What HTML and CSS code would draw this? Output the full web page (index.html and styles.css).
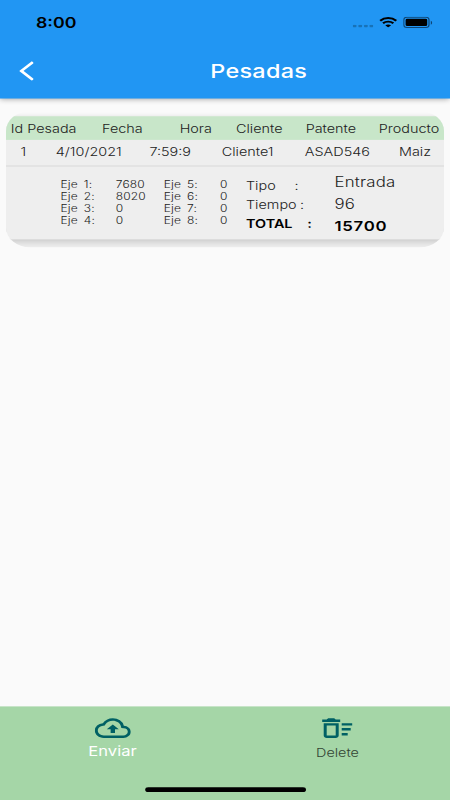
FILE: index.html
```html
<!DOCTYPE html>
<html lang="es">
<head>
    <meta charset="UTF-8">
    <meta name="viewport" content="width=device-width, initial-scale=1.0">
    <title>Pesadas</title>
    <link rel="stylesheet" href="styles.css">
</head>
<body>
    <div class="screen">
        <header class="app-bar">
            <div class="status-bar">
                <span class="time">8:00</span>
                <div class="status-icons">
                    <svg class="signal" viewBox="0 0 17 3" fill="#1872b7">
                        <rect width="3" height="3" rx="0.8"/>
                        <rect x="4.7" width="3" height="3" rx="0.8"/>
                        <rect x="9.4" width="3" height="3" rx="0.8"/>
                        <rect x="14" width="3" height="3" rx="0.8"/>
                    </svg>
                    <svg class="wifi" viewBox="0 0 15 11">
                        <path d="M.8 4C4.6.4 10.4.4 14.2 4M3.2 6.6c2.4-2.2 6.2-2.2 8.6 0" fill="none" stroke="#000" stroke-width="2"/>
                        <path d="M5.1 8.6c1.4-1.1 3.4-1.1 4.8 0L7.5 11z"/>
                    </svg>
                    <svg class="battery" viewBox="0 0 25 12">
                        <rect x="0.5" y="0.5" width="21" height="10.5" rx="2.6" fill="none" stroke="#0e4574"/>
                        <rect x="2" y="2" width="18" height="7.5" rx="1.3"/>
                        <path d="M23 4v4c1.5-.6 1.5-3.4 0-4z" fill="#0e4574"/>
                    </svg>
                </div>
            </div>
            <div class="toolbar">
                <svg class="back" viewBox="0 0 12 20">
                    <path d="M11.4 1L1.8 10l9.6 9" fill="none" stroke="#fff" stroke-width="2.5"/>
                </svg>
                <h1 class="title">Pesadas</h1>
            </div>
        </header>

        <main class="content">
            <div class="card-clip">
                <div class="card">
                    <div class="row row-head">
                        <span>Id Pesada</span>
                        <span>Fecha</span>
                        <span>Hora</span>
                        <span>Cliente</span>
                        <span>Patente</span>
                        <span>Producto</span>
                    </div>
                    <div class="row row-data">
                        <span>1</span>
                        <span>4/10/2021</span>
                        <span>7:59:9</span>
                        <span>Cliente1</span>
                        <span>ASAD546</span>
                        <span>Maiz</span>
                    </div>
                    <div class="detail">
                        <div class="ejes">
                            <span>Eje</span><span>1:</span><span>7680</span><span>Eje</span><span>5:</span><span>0</span>
                            <span>Eje</span><span>2:</span><span>8020</span><span>Eje</span><span>6:</span><span>0</span>
                            <span>Eje</span><span>3:</span><span>0</span><span>Eje</span><span>7:</span><span>0</span>
                            <span>Eje</span><span>4:</span><span>0</span><span>Eje</span><span>8:</span><span>0</span>
                        </div>
                        <div class="labels">
                            <div><span class="label-tipo">Tipo</span>:</div>
                            <div><span class="label-tiempo">Tiempo</span>:</div>
                            <div class="bold"><span class="label-total">TOTAL</span>:</div>
                        </div>
                        <div class="values">
                            <div>Entrada</div>
                            <div>96</div>
                            <div class="bold">15700</div>
                        </div>
                    </div>
                </div>
            </div>
        </main>

        <nav class="bottom-bar">
            <div class="nav-item active">
                <svg viewBox="0 0 24 24">
                    <path d="M19.35 10.04A7.49 7.49 0 0 0 12 4C9.11 4 6.6 5.64 5.35 8.04A5.994 5.994 0 0 0 0 14c0 3.31 2.69 6 6 6h13c2.76 0 5-2.24 5-5 0-2.64-2.05-4.78-4.65-4.96zM19 18H6c-2.21 0-4-1.79-4-4 0-2.05 1.53-3.76 3.56-3.97l1.07-.11.5-.95A5.469 5.469 0 0 1 12 6c2.62 0 4.88 1.86 5.39 4.43l.3 1.5 1.53.11A2.98 2.98 0 0 1 22 15c0 1.65-1.35 3-3 3zM8 13h2.55v3h2.9v-3H16l-4-4z"/>
                </svg>
                <span>Enviar</span>
            </div>
            <div class="nav-item">
                <svg viewBox="0 0 24 24">
                    <path d="M15 16h4v2h-4zM15 8h7v2h-7zM15 12h6v2h-6zM3 18c0 1.1.9 2 2 2h6c1.1 0 2-.9 2-2V8H3v10zm2-8h6v8H5v-8zM10 4H6L5 5H2v2h12V5h-3z"/>
                </svg>
                <span>Delete</span>
            </div>
            <div class="home-indicator"></div>
        </nav>
    </div>
</body>
</html>
```

FILE: styles.css
```css
* {
    box-sizing: border-box;
}

body {
    margin: 0;
    height: 100vh;
    overflow: hidden;
    background-color: #fafafa;
    font-family: Inter, Roboto, sans-serif;
}

/* 375x812 phone screen stretched over the window */
.screen {
    display: flex;
    flex-direction: column;
    width: 375px;
    height: 812px;
    transform: scale(1.2, 0.98522);
    transform-origin: 0 0;
    background-color: #fafafa;
    color: #222;
}

.app-bar {
    height: 99.5px;
    background-color: #2196f3;
    box-shadow: 0 1px 5px rgba(0,0,0,0.35);
}

.status-bar {
    display: flex;
    justify-content: space-between;
    align-items: center;
    height: 45px;
    padding: 0 14px 0 30px;
}

.time {
    color: #000;
    font-size: 14.8px;
    font-weight: 600;
}

.status-icons {
    display: flex;
    align-items: center;
}

.signal {
    width: 17px;
    height: 3px;
    margin: 8px 5px 0 0;
}

.wifi {
    width: 15px;
    height: 11px;
    margin-right: 5px;
}

.battery {
    width: 25px;
    height: 12px;
}

.toolbar {
    display: flex;
    align-items: center;
    height: 54px;
    padding-left: 16px;
}

.back {
    width: 12px;
    height: 20px;
}

.title {
    margin: 0 0 0 147.2px;
    color: #fff;
    font-size: 19.5px;
    font-weight: 500;
    letter-spacing: 0.25px;
}

.content {
    flex: 1;
    padding: 13px 5px;
}

.card-clip {
    height: 138.5px;
    padding-top: 5.5px;
    border-radius: 20px;
    overflow: hidden;
}

.card {
    height: 125px;
    background-color: #eee;
    box-shadow: 0 1px 5px rgba(0,0,0,0.15), 0 10px 6px -2px rgba(0,0,0,0.11);
}

.row {
    display: grid;
    align-items: center;
    font-size: 12px;
    font-weight: 300;
    white-space: nowrap;
}

.row-head {
    grid-template-columns: 76px 64.7px 47px 58px 61px 1fr;
    height: 24px;
    padding-left: 4px;
    background-color: #c8e6c9;
}

.row-data {
    grid-template-columns: 29.5px 78px 60.3px 69.2px 78.5px 1fr;
    height: 27px;
    padding: 0 0 3px 12px;
    border-bottom: 1px solid #d8d8d8;
}

.detail {
    display: flex;
    padding-top: 12px;
}

.ejes {
    display: grid;
    grid-template-columns: 19.4px 26.6px 40px 19.4px 27.5px 21.6px;
    grid-auto-rows: 12px;
    line-height: 12px;
    padding-left: 45.5px;
    font-size: 10px;
    font-weight: 300;
    letter-spacing: 0.1px;
}

.labels {
    margin-top: -1px;
    width: 73.7px;
    font-size: 12px;
    font-weight: 300;
    line-height: 18.8px;
}

.labels span {
    display: inline-block;
}

.label-tipo {
    width: 40.5px;
}

.label-tiempo {
    width: 45px;
}

.label-total {
    width: 51px;
}

.values {
    margin-top: -7px;
    font-size: 14px;
    font-weight: 300;
    line-height: 21.8px;
    letter-spacing: 0.2px;
}

.labels .bold,
.values .bold {
    color: #000;
    font-weight: 600;
}

.values .bold {
    letter-spacing: 0.6px;
}

.bottom-bar {
    position: relative;
    display: grid;
    grid-template-columns: 1fr 1fr;
    height: 95px;
    padding-top: 7px;
    background-color: #a5d6a7;
}

.nav-item {
    display: flex;
    flex-direction: column;
    align-items: center;
    color: #334434;
    font-size: 12px;
    font-weight: 300;
    line-height: 19px;
}

.nav-item svg {
    width: 30px;
    height: 30px;
    fill: #006064;
}

.nav-item.active {
    color: #fff;
    font-size: 13.8px;
    font-weight: 400;
    line-height: 17px;
}

/* drawn over the bar by the system */
.home-indicator {
    position: absolute;
    left: 50%;
    bottom: 8px;
    width: 134px;
    height: 5px;
    margin-left: -67px;
    border-radius: 3px;
    background-color: #000;
}
```
